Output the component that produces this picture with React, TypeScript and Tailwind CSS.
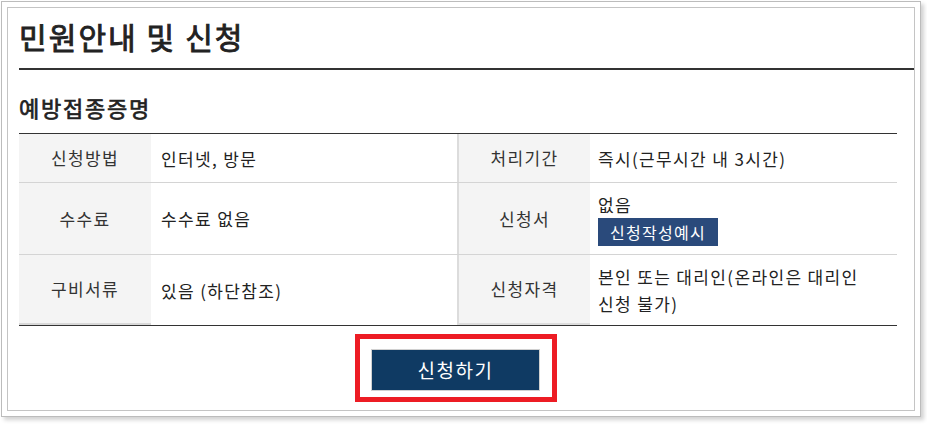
const font = { fontFamily: '"Noto Sans CJK KR", "Noto Sans", sans-serif' }

type Row = { h: string; th1: string; td1: React.ReactNode; th2: string; td2: React.ReactNode; last?: boolean }

function Th({ children, divider, last }: { children: React.ReactNode; divider?: boolean; last?: boolean }) {
  return (
    <div
      className={`flex items-center justify-center bg-[#f4f4f4] text-[17px] tracking-[0.08em] text-[#333] ${divider ? 'border-l-2 border-[#dcdcdc]' : ''} ${last ? 'border-b-2 border-[#d8d8d8]' : ''}`}
    >
      {children}
    </div>
  )
}

function Td({ children, pad }: { children: React.ReactNode; pad: string }) {
  return (
    <div className={`flex items-center ${pad} pr-[10px] text-[17px] leading-[27px] tracking-[0.08em] break-keep text-[#222]`}>
      {children}
    </div>
  )
}

export default function App() {
  const rows: Row[] = [
    { h: 'h-[49px]', th1: '신청방법', td1: '인터넷, 방문', th2: '처리기간', td2: '즉시(근무시간 내 3시간)' },
    {
      h: 'h-[72px]',
      th1: '수수료',
      td1: '수수료 없음',
      th2: '신청서',
      td2: (
        <div className="flex flex-col items-start">
          <span>없음</span>
          <button className="h-[28px] bg-[#2a4a7b] px-[12px] text-[16px] leading-[28px] tracking-[0.08em] text-white">
            신청작성예시
          </button>
        </div>
      ),
    },
    {
      h: 'h-[70px]',
      th1: '구비서류',
      td1: '있음 (하단참조)',
      th2: '신청자격',
      td2: '본인 또는 대리인(온라인은 대리인 신청 불가)',
      last: true,
    },
  ]

  return (
    <div className="h-[424px] w-[927px] bg-white pl-[1px] pt-[1px]" style={font}>
      <div className="h-[416px] w-[920px] border border-[#bcbcbc] bg-white p-[5px] shadow-[3px_3px_4px_rgba(0,0,0,0.18)]">
        <div className="flex h-full flex-col border border-[#c4c4c4] pl-[11px]">
          <h1 className="border-b-2 border-[#333] pb-[12px] pt-[8px] text-[30px] font-normal leading-[40px] tracking-[0.07em] text-[#222] [-webkit-text-stroke:0.9px_#222]">
            민원안내 및 신청
          </h1>

          <h2 className="mt-[22px] text-[22px] font-normal leading-[30px] tracking-[0.08em] text-[#222] [-webkit-text-stroke:0.7px_#222]">
            예방접종증명
          </h2>

          <div className="mr-[17px] mt-[11px] border-y border-t-[#333] border-b-[#333]">
            {rows.map((r, i) => (
              <div
                key={r.th1}
                className={`grid ${r.h} grid-cols-[132px_306px_133px_1fr] ${i < rows.length - 1 ? 'border-b border-[#d4d4d4]' : ''}`}
              >
                <Th last={r.last}>{r.th1}</Th>
                <Td pad="pl-[10px]">{r.td1}</Td>
                <Th divider last={r.last}>{r.th2}</Th>
                <Td pad="pl-[8px]">{r.td2}</Td>
              </div>
            ))}
          </div>

          <div className="mr-[21px] mt-[8px] flex justify-center">
            <div className="border-[5px] border-[#ed1c24] pb-[6px] pl-[11px] pr-[12px] pt-[10px]">
              <button className="h-[42px] w-[169px] border border-[#d0d0d0] bg-[#0f3a63] text-[19px] tracking-[0.08em] text-white">
                신청하기
              </button>
            </div>
          </div>
        </div>
      </div>
    </div>
  )
}
